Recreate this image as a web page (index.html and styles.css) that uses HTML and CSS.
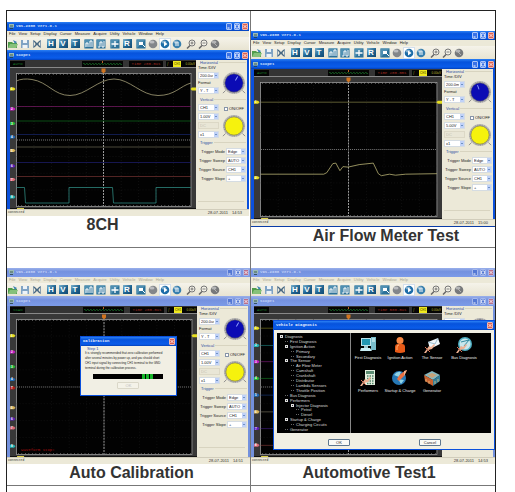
FILE: index.html
```html
<!DOCTYPE html>
<html lang="en">
<head>
<meta charset="utf-8">
<title>VDS-2088 Gallery</title>
<link rel="stylesheet" href="styles.css">
</head>
<body>
<main class="gallery">
  <figure class="cell cell-raised">
    <div class="window" data-view="channels"></div>
    <figcaption class="caption shift-left">8CH</figcaption>
  </figure>
  <figure class="cell">
    <div class="window" data-view="airflow"></div>
    <figcaption class="caption shift-right">Air Flow Meter Test</figcaption>
  </figure>
  <figure class="cell">
    <div class="window" data-view="calibration"></div>
    <figcaption class="caption">Auto Calibration</figcaption>
  </figure>
  <figure class="cell">
    <div class="window" data-view="diagnosis"></div>
    <figcaption class="caption">Automotive Test1</figcaption>
  </figure>
  <div class="cell cell-empty"></div>
  <div class="cell cell-empty"></div>
</main>
<script src="app.js"></script>
</body>
</html>
```
FILE: styles.css
```css
* { box-sizing: border-box; }

body {
  margin: 10px 19px 0 6px;
  background: #fff;
  color: #333;
  font-family: "Liberation Sans", Arial, sans-serif;
}

.gallery {
  display: grid;
  grid-template-columns: 1fr 1fr;
  grid-template-rows: auto auto 1fr;
  min-height: calc(100vh - 10px);
  border: 1px solid #222;
  border-bottom: 0;
}

.cell {
  min-width: 0;
  margin: 0;
  padding: 20px 0 2px;
  border-bottom: 1px solid #777;
}
.cell:nth-child(odd) { border-right: 1px solid #777; }
.cell:nth-child(3), .cell:nth-child(4) { padding-bottom: 3px; }
.cell-raised { padding-top: 11px; }
.cell-raised .window { margin-right: 1px; }
.cell-empty { padding: 0; border-bottom: 0; }

.caption {
  font-size: 16px;
  line-height: 18px;
  font-weight: bold;
  text-align: center;
}
.shift-left { padding-right: 52px; }
.shift-right { padding-left: 26px; }
.cell:nth-child(3) .caption { padding-left: 6px; }
.cell:nth-child(4) .caption { padding-right: 8px; }

/* Application window */
.window {
  --frame: #0a50dc;
  position: relative;
  background: #ece9d8;
  color: #222;
  font-family: "Liberation Sans Narrow", "Liberation Sans", sans-serif;
  font-size: 4px;
  line-height: 5px;
}
.window.inactive { --frame: #7391dd; }

.titlebar {
  display: flex;
  align-items: center;
  gap: 2px;
  height: 9px;
  padding: 0 1px 0 2px;
  background: linear-gradient(#2b80f5, #0653dc 30%, #0a5cea 80%, #0340b8);
  color: #cfe0fd;
  font: bold 4px/9px "Liberation Mono", monospace;
}
.inactive .titlebar { background: linear-gradient(#9ab0ea, #7491df 40%, #7c9be8); color: #c4d3f8; }
.titlebar .name { flex: 1; }
.titlebar.child { height: 10px; line-height: 10px; }
.app-icon { width: 5px; height: 5px; }

.winbtn {
  display: block;
  width: 6px;
  height: 7px;
  padding: 0;
  border: 1px solid #a9c5f8;
  border-radius: 1px;
  background: #3a72e6;
}
.winbtn svg { display: block; width: 4px; height: 5px; }
.winbtn.close { background: #dc6052; border-color: #efb6ae; }
.inactive .winbtn { border-color: #a5b8ec; background: #5478d4; }
.inactive .winbtn.close { background: #b9708c; }
.buttons { display: flex; gap: 2px; }

.menu {
  display: flex;
  gap: 3px;
  height: 6px;
  padding-left: 2px;
  line-height: 6px;
}
.menu a { color: #222; text-decoration: none; }
.inactive .menu a { color: #aaa796; }

.toolbar {
  display: flex;
  align-items: center;
  height: 13px;
  background: linear-gradient(#f5f3ea, #e8e4d2);
}
.tool {
  flex: none;
  display: flex;
  align-items: center;
  justify-content: center;
  width: 12px;
  height: 12px;
  padding: 0;
  border: 0;
  background: none;
}
.tool svg { display: block; width: 10px; height: 10px; }
.tool.gap { margin-left: 2px; }
.tool.on { background: #fff; outline: 1px solid #d3dfec; outline-offset: -1px; }
.letter {
  width: 9px;
  height: 9px;
  background: linear-gradient(135deg, #7fb4cf, #1d628f 55%, #124a73);
  color: #fff;
  font: bold 8px/9px "Liberation Sans", sans-serif;
}

.body {
  display: flex;
  height: 150px;
  padding: 0 2px 0 3px;
  background: var(--frame);
}
.cell-raised .body { height: 149px; }
.inactive .body { height: 151px; }
.airflow { border-bottom: 1px solid #0a3ca8; }

/* Oscilloscope */
.scope {
  flex: 1;
  min-width: 0;
  display: flex;
  flex-direction: column;
  background: #343434;
}
.readout {
  display: grid;
  grid-template-columns: 15px 57fr 41px 6px 34px 3px 30px;
  height: 8px;
  padding: 1px 0;
  border-bottom: 1px solid #888;
  font: 4px/6px "Liberation Mono", monospace;
}
.readout > * { background: #050505; overflow: hidden; white-space: nowrap; }
.readout .blank { background: none; }
.mode { padding-left: 3px; color: #187b25; }
.preview { display: block; width: 41px; height: 6px; }
.timebase { text-align: center; color: #a02a20; }
.trigger { display: flex; justify-content: space-between; padding: 0 1px; color: #bdbb30; font: 3px/6px "Liberation Sans", sans-serif; }
.trigger b { padding: 0 1px; background: #efe91e; color: #776f00; }
.plot { display: block; flex: 1; width: 100%; min-height: 0; background: #383838; }
.note { fill: #a80f0f; font: 4px "Liberation Mono", monospace; }
.tag { fill: #fff; font: bold 3px "Liberation Sans", sans-serif; }

/* Control panel */
.panel { flex: none; width: 51px; padding: 0 1px 0 2px; background: #ece9d8; }
.group { min-width: 0; margin: 0; padding: 0; border: 0; }
.group legend {
  display: flex;
  align-items: center;
  gap: 1px;
  width: 100%;
  height: 5px;
  padding: 0 0 0 2px;
  color: #3151a2;
  line-height: 5px;
}
.group legend::after { content: ""; flex: 1; border-top: 1px solid #d8d4c0; }
.group.horizontal { height: 37px; }
.group.vertical { height: 43px; }
.pair { display: flex; justify-content: space-between; }
.stack { display: flex; flex-direction: column; gap: 1px; width: 21px; }
.stack label { line-height: 6px; white-space: nowrap; }
.vertical .stack { padding-top: 2px; gap: 2px; }
.dial { display: flex; flex-direction: column; align-items: center; width: 24px; }
.horizontal .dial { padding-top: 6px; }
.vertical .dial { padding-top: 3px; gap: 2px; }
.knob { display: block; width: 24px; height: 24px; }

.box {
  display: block;
  width: 100%;
  height: 7px;
  padding: 0 5px 0 1px;
  border: 1px solid #d5dce2;
  border-radius: 0;
  appearance: none;
  background: linear-gradient(#7092c5, #7092c5) right 1px center / 2px 1px no-repeat,
    linear-gradient(90deg, transparent calc(100% - 4px), #c0d2f8 0) #fff;
  color: #222;
  font: 4px/5px "Liberation Sans Narrow", "Liberation Sans", sans-serif;
}
.box:disabled { background: #e9e6d6; border-color: #dcd8c6; color: #c5c1b0; opacity: 1; }
.check { display: flex; align-items: center; gap: 1px; height: 7px; font: 4px/7px "Liberation Sans", sans-serif; }
.check input {
  flex: none;
  width: 4px;
  height: 4px;
  margin: 0;
  appearance: none;
  border: 1px solid #8794a8;
  background: #fff;
}
.trig-rows { display: grid; gap: 2px; padding-top: 3px; }
.trig-row { display: grid; grid-template-columns: 1fr 20px; gap: 1px; align-items: center; height: 7px; text-align: right; white-space: nowrap; }
.rule { height: 1px; margin: 19px 2px 0 0; background: #d8d4c0; }

.status {
  display: flex;
  justify-content: space-between;
  height: 7px;
  padding: 0 7px 0 1px;
  border-top: 1px solid #d1cdbb;
  font: 3px/6px "Liberation Mono", monospace;
  color: #333;
}
.status .stamp { display: flex; gap: 4px; font: 4px/6px "Liberation Sans Narrow", "Liberation Sans", sans-serif; }

/* Dialogs over a window */
.dialog { position: absolute; border: 1px solid #0a50dc; background: #f1efe4; }
.dialog .titlebar { background: linear-gradient(#2b80f5, #0653dc 30%, #0a5cea 80%, #0340b8); color: #eaf2ff; }
.dialog .winbtn.close { background: #dc6052; border-color: #efb6ae; }
.push {
  width: 22px;
  height: 7px;
  padding: 0;
  border: 1px solid #60788f;
  border-radius: 1px;
  background: #fafaf6;
  color: #222;
  font: 4px/5px "Liberation Sans Narrow", "Liberation Sans", sans-serif;
}
.push:disabled { border-color: #dad7c8; background: #f4f2e8; color: #bbb; }

.calibrate { left: 30%; top: 68px; width: 40%; height: 60px; }
.step { padding: 1px 4px 0; }
.step h2 { margin: 0 0 0 2px; color: #3151a2; font-size: 4px; line-height: 4px; font-weight: normal; }
.step p { margin: 0; color: #222; font: 3px/5px "Liberation Sans", sans-serif; white-space: nowrap; }
.progress { display: flex; height: 5px; margin: 3px 9px 3px 8px; padding-left: 49px; background: #000; }
.progress span { width: 3px; margin-right: 1px; background: #17b52a; }
.step .push { display: block; margin: 0 auto; }

.vehicle { left: 22px; right: 0; top: 52px; height: 130px; }
.vehicle .content { display: flex; height: 100px; margin: 3px 3px 0; background: #000; color: #ddd; }
.tree {
  display: grid;
  grid-auto-rows: minmax(0, 1fr);
  width: 74px;
  margin: 0;
  padding: 1px 0 1px 3px;
  border-right: 1px solid #888;
  list-style: none;
  white-space: nowrap;
}
.tree li { display: flex; align-items: center; gap: 2px; }
.tree li::before { content: ""; flex: none; width: 3px; border-top: 1px dotted #666; }
.tree .node::before { height: 3px; border: 0; background: linear-gradient(#333, #333) center / 1px 1px no-repeat #ddd; }
.tree .d1 { padding-left: 5px; }
.tree .d2 { padding-left: 11px; }
.tree .d3 { padding-left: 16px; }
.items { display: grid; grid-template-columns: repeat(4, 32px); grid-auto-rows: 33px; padding-top: 3px; margin: 0 0 0 1px; }
.item { display: flex; flex-direction: column; align-items: center; gap: 2px; padding: 0; border: 0; background: none; color: #eee; font: inherit; white-space: nowrap; }
.item svg { display: block; width: 18px; height: 17px; }
.actions { display: flex; justify-content: space-between; padding: 6px 53px 0 54px; }
```
FILE: app.js
```js
const svg = (box, inner, cls = '') => `<svg class="${cls}" viewBox="0 0 ${box}" aria-hidden="true">${inner}</svg>`;

/* ---- Toolbar ---- */
const tile = '<rect x=".5" y=".5" width="9" height="9" fill="#2b7199"/><path d="M.5 9.500V.5h9z" fill="#4f8fb2"/>';
const ball = (c) => `<circle cx="5" cy="5" r="4.300" fill="${c}"/><ellipse cx="4" cy="3" rx="2.500" ry="1.600" fill="#fff" opacity=".45"/>`;
const lens = (sign) => `<circle cx="6" cy="4" r="3" fill="#f2f0e6" stroke="#777" stroke-width="1"/><path d="M4 6.500 1 9.500" stroke="#666" stroke-width="1.500"/><path d="${sign}" stroke="#555" stroke-width=".7"/>`;
const tools = [
  ['Open', '<path d="M0 3h4l1 1h4v5H0z" fill="#4f9c4b"/><path d="M2 5h8L8 9H0z" fill="#86c17a"/><path d="M5 1l4 2-2 2z" fill="#3d83b0"/>'],
  ['Save', '<path d="M1 1h8v8H1z" fill="#7fa3c4"/><path d="M3 1h4v3H3zM2.500 6h5v3h-5z" fill="#edf3f8"/>'],
  ['Fit', '<path d="M1.500 1v8M8.500 1v8" stroke="#8aa0b2"/><path d="M2 2l6 6M8 2L2 8" stroke="#496882" stroke-width="1.300"/><path d="M3.500 4h3v2h-3z" fill="#496882"/>'],
  ['H', null, 1], ['V', null], ['T', null],
  ['Waveform 1', tile + '<path d="M2 8V4h2v4M6 8V2h2v6" stroke="#fff" fill="none"/>', 1],
  ['Waveform 2', tile + '<path d="M2 8h2V3h2v5h2V2" stroke="#fff" fill="none"/>'],
  ['Grid', tile + '<path d="M5 2v6M1.500 5h7" stroke="#fff" stroke-width="1.300"/>', 1],
  ['R', null],
  ['Snapshot', tile + '<path d="M3 3h4v3H3z" fill="#fff"/><path d="M6 5l3 3" stroke="#fff"/>', 1],
  ['Record', ball('#83868a')],
  ['Run', ball('#1d6da8') + '<path d="M4 2.500 7.500 5 4 7.500z" fill="#fff"/>', 0, 1],
  ['Pause', ball('#377fae') + '<path d="M4 3v4M6 3v4" stroke="#fff"/>'],
  ['Zoom in', lens('M4.500 4h3M6 2.500v3'), 1],
  ['Zoom out', lens('M4.500 4h3')],
  ['Stop', ball('#77797b') + '<path d="M3 3l4 4" stroke="#b3b3b3"/>'],
];
const toolbar = tools.map(([name, art, gap, on]) =>
  `<button class="tool${gap ? ' gap' : ''}${on ? ' on' : ''}" type="button" aria-label="${name}">${art ? svg('10 10', art) : `<span class="letter">${name}</span>`}</button>`).join('');

const menu = ['File', 'View', 'Setup', 'Display', 'Cursor', 'Measure', 'Acquire', 'Utility', 'Vehicle', 'Window', 'Help']
  .map((m) => `<a href="#">${m}</a>`).join('');

const close = `<button class="winbtn close" type="button" aria-label="Close">${svg('4 5', '<path d="M.5 1l3 3M3.500 1l-3 3" stroke="#fff" stroke-width=".8"/>')}</button>`;
const titlebar = (name, cls = '') => `<div class="titlebar ${cls}">
  ${svg('5 5', '<rect width="5" height="3.500" fill="#9bbcb4"/><path d="M1 2h3M1 4.500h3" stroke="#24433f" stroke-width=".8"/>', 'app-icon')}
  <span class="name">${name}</span>
  <span class="buttons">
    <button class="winbtn" type="button" aria-label="Minimize">${svg('4 5', '<path d="M.5 4h2" stroke="#fff"/>')}</button>
    <button class="winbtn" type="button" aria-label="Maximize">${svg('4 5', '<path d="M.5 1h3v3h-3z" fill="none" stroke="#fff" stroke-width=".7"/>')}</button>
    ${close}
  </span></div>`;

/* ---- Plot ---- */
const C = { y: '#e6df20', m: '#c41cc0', g: '#21b536', b: '#1c68b4', t: '#d8b45a', p: '#5b20b8', r: '#d86878', c: '#21b3b3', d: '#b01d1d' };
const tag = ([y, color, n], x = 0) =>
  `<path d="M${x} ${y - 1.5}h4l1.500 1.500-1.500 1.500h-4z" fill="${C[color]}"/><text class="tag" x="${x + 1}" y="${y + 1}">${n}</text>`;
const line = (y, color, end = 181) => `<path d="M6.500 ${y}H${end}" stroke="${color}" stroke-width=".7" opacity=".8"/>`;

const views = {
  channels: {
    time: '200.0us', format: 'Y - T', volts: '1.00V', mode: 'AUTO', clock: '14:53', angle: 30,
    tags: [[21, 'y', 1], [41, 'm', 2], [55.5, 'g', 3], [69, 'b', 4], [82.5, 't', 5], [98, 'p', 6], [111.5, 'r', 7], [129, 'c', 8]],
    right: 21,
    art: '<path d="M6.500 13C10 11 16 10.500 22 11.500C38 14 44 27.500 60 27.500S88 11 104 11S131 27.500 148 27.500S170 18 181 15" fill="none" stroke="#a7a17a" stroke-width=".8"/>'
      + line(38.5, '#9b2181') + line(53, '#168a26') + line(66.5, '#1d3188') + line(79, '#87826a') + line(94.5, '#27278f') + line(108.5, '#94403f')
      + '<path d="M6.500 119.500H14.500L15.500 135H59V119.500H102.500L103.500 135H146V119.500H181" fill="none" stroke="#2d877d" stroke-width=".8"/>',
  },
  airflow: {
    time: '200.0ms', format: 'Y - T', volts: '5.00V', mode: 'AUTO', clock: '15:00', angle: -20,
    tags: [[25, 'y', 1], [100, 'y', 2]],
    right: 25,
    art: line(25, '#a5a157') + '<path d="M6.500 96.500H69L72 95 78 86 81 85.500 85 93 88 89 93 89.500 104 87 118 85.500 123 96 126 98 134 96.500 140 97.500 150 96.500 181 96" fill="none" stroke="#b6b073" stroke-width=".8"/>',
  },
  calibration: {
    inactive: true, time: '200.0us', format: 'Y - T', volts: '1.00V', mode: 'SCAN', clock: '14:51', angle: 30,
    tags: [[21.5, 'y', 1], [37.5, 'm', 2], [52, 'g', 3], [64.5, 'b', 4], [73, 'd', 'T'], [92.5, 't', 5], [103.5, 'p', 6], [112.5, 'r', 7], [130.5, 'c', 8]],
    right: 21.5,
    art: '<text class="note" x="11" y="135">Waveform stop!</text>',
  },
  diagnosis: {
    inactive: true, time: '500.0us', format: 'Y - T', volts: '1.00V', mode: 'AUTO', clock: '14:53', angle: 30,
    tags: [[14, 'y', 1], [31, 'c', 2], [47, 'm', 3], [63.5, 'g', 4], [80, 'b', 5], [96.5, 't', 6], [113, 'p', 7], [129.5, 'r', 8]],
    art: line(14, '#8c8a22') + line(31, '#21908f') + line(47, '#8d2189') + line(63.5, '#168a26') + line(80, '#1d4188') + line(96.5, '#87826a') + line(113, '#47208f') + line(129.5, '#94403f'),
  },
};

function plot(v) {
  let grid = '';
  for (let i = 1; i < 10; i++) grid += `M${6.5 + i * 17.45} 5V138`;
  for (let i = 1; i < 8; i++) grid += `M6.500 ${5 + i * 16.7}H181`;
  return `<svg class="plot" viewBox="0 0 186 141" preserveAspectRatio="none" aria-hidden="true">
    <rect x="6.500" y="5.500" width="174.500" height="133" fill="#020202" stroke="#999" stroke-width=".8"/>
    <path d="${grid}" stroke="#292929" stroke-width=".4" stroke-dasharray="1 2"/>
    <path d="M8 6.500H180M8 137.500H180" stroke="#888" stroke-dasharray=".6 2.890"/>
    <path d="M93.500 5V138" stroke="#999" stroke-width="1" stroke-dasharray="2 1"/>
    <path d="M7 72H181" stroke="#777" stroke-width="1" stroke-dasharray="1 1"/>
    ${v.art}
    <path d="M91.500 .5h4v3l-2 2-2-2z" fill="#d17520"/>
    <path d="M0 140.500H186" stroke="#111"/><path d="M7 140.500h7" stroke="#ddd14b"/>
    ${v.tags.map((t) => tag(t)).join('')}
    ${v.right ? `<path d="M186 ${v.right - 1.5}h-4l-1.500 1.500 1.500 1.500h4z" fill="#e6df20"/>` : ''}
  </svg>`;
}

const preview = svg('41 6', `<path d="M1 3${'l1 -1 1 2 1 -1'.repeat(13)}" fill="none" stroke="#176925" stroke-width=".7"/><path d="M20.500 0v2" stroke="#bd6125"/>`, 'preview');

const knob = (color, angle) => svg('26 26', `
  <path d="M4 21l-3 3M22 21l3 3" stroke="#888" stroke-width="1"/>
  <circle cx="13" cy="13" r="12" fill="#c4c3c0"/><circle cx="13" cy="13" r="11" fill="none" stroke="#85848a" stroke-width="1" stroke-dasharray="1 1"/>
  <circle cx="13" cy="13" r="10" fill="${color}" stroke="#65645f" stroke-width=".7"/>
  ${angle === null ? '' : `<path d="M13 10V5" stroke="#91a1ff" stroke-width="1" transform="rotate(${angle} 13 13)"/>`}`, 'knob');

const select = (label, value, off) => `<select class="box" aria-label="${label}"${off ? ' disabled' : ''}><option>${value}</option></select>`;

function panel(v, id) {
  const rows = [['Mode', 'Edge'], ['Sweep', 'AUTO'], ['Source', 'CH1'], ['Slope', '+']];
  return `<div class="panel">
    <fieldset class="group horizontal"><legend>Horizontal</legend><div class="pair">
      <div class="stack">
        <label for="${id}-time">Time /DIV</label>
        <select class="box" id="${id}-time"><option>${v.time}</option></select>
        <label for="${id}-format">Format</label>
        <select class="box" id="${id}-format"><option>${v.format}</option></select>
      </div><div class="dial">${knob('#0b0bb4', v.angle)}</div></div></fieldset>
    <fieldset class="group vertical"><legend>Vertical</legend><div class="pair">
      <div class="stack">${select('Channel', 'CH1')}${select('Volts', v.volts)}${select('Coupling', 'DC', true)}${select('Probe', 'x1')}</div>
      <div class="dial"><label class="check"><input type="checkbox" checked>ON/OFF</label>${knob('#f6f20d', null)}</div></div></fieldset>
    <fieldset class="group"><legend>Trigger</legend><div class="trig-rows">
      ${rows.map(([n, val]) => `<div class="trig-row"><label for="${id}-${n}">Trigger ${n}</label><select class="box" id="${id}-${n}"><option>${val}</option></select></div>`).join('')}
    </div></fieldset><div class="rule"></div></div>`;
}

/* ---- Dialogs ---- */
const calibrate = `<section class="dialog calibrate">
  <div class="titlebar"><span class="name">Calibration</span>${close}</div>
  <div class="step"><h2>Step 1</h2>
    <p>It is strongly recommended that zero calibration performed<br>after several minutes by power up, and you should short<br>CH1 input signal by connecting CH1 terminal to the GND<br>terminal during the calibration process.</p>
    <div class="progress"><span></span><span></span><span></span></div>
    <button class="push" type="button" disabled>OK</button></div></section>`;

const hand = '<path d="M1 17l5-7 2 1 3-3 1 1-3 4-4 1-2 3z" fill="#eeb092"/><path d="M2 11l5 5" stroke="#d97357"/>';
const items = [
  ['First Diagnosis', '<path d="M2 2h10v8H2z" fill="#bce4ec"/><path d="M3 3h8v6H3z" fill="#2297b3"/><path d="M5 10h4v2H5z" fill="#9ac7d0"/><path d="M12 1h5v13h-5z" fill="#78bdcb"/><path d="M13 3h3M13 5h3" stroke="#eaffff"/><path d="M2 12h9l2 3H1z" fill="#c9eef5"/>'],
  ['Ignition Action', '<circle cx="9" cy="4.500" r="3.500" fill="#f88742"/><path d="M4 16V11q0-3 3-3h4q3 0 3 3v5q-5 2-10 0z" fill="#e75a17"/><path d="M6 14V11q0-2 2-2" stroke="#ffae70" fill="none"/>'],
  ['The Sensor', '<path d="M5 6l10-4 2 6-10 5z" fill="#edf5fa"/><path d="M5 6l7 2 3-6" fill="none" stroke="#7ba8c2" stroke-width=".7"/>' + hand],
  ['Bus Diagnosis', '<circle cx="10" cy="8" r="7" fill="#4dadc2"/><circle cx="10" cy="8" r="5.500" fill="#c9e7ec"/><path d="M6 6l8-2-5 6" fill="none" stroke="#318a9f"/>' + hand],
  ['Performers', '<path d="M6 1h10v15H6z" fill="#e4efdf"/><path d="M7 2h8v3H7z" fill="#5b8c73"/><path d="M8 7h7M8 9.500h7M8 12h7M8 14.500h7" stroke="#52866b" stroke-width="1.300" stroke-dasharray="1.500 1"/>' + hand],
  ['Startup &amp; Charge', '<circle cx="8" cy="9" r="7" fill="#2678b6"/><path d="M3 6q3-4 7-3L8 8zM7 10l6 1-3 4z" fill="#8fd2e5"/><path d="M6 10q3-6 10-9l-3 6-5 5z" fill="#ec7041"/><path d="M13 2l3-1-3 6z" fill="#f1b28f"/>'],
  ['Generator', '<path d="M1 6l8-4 8 4-7 5z" fill="#84b9c2"/><path d="M1 6l9 5v6l-8-5z" fill="#c76331"/><path d="M17 6l-7 5v6l7-5z" fill="#347e97"/><path d="M4 6l5-2 5 2-5 3z" fill="#c6a37a"/><path d="M3 10v3M6 12v3M12 12v3M15 10v3" stroke="#e4bd7c" stroke-width=".8"/>'],
];
const tree = [
  [0, 'Diagnosis', 1], [1, 'First Diagnosis'], [1, 'Ignition Action', 1], [2, 'Primary'], [2, 'Secondary'], [1, 'The Sensor', 1],
  [2, 'Air Flow Meter'], [2, 'Camshaft'], [2, 'Crankshaft'], [2, 'Distributor'], [2, 'Lambda Sensors'], [2, 'Throttle Position'],
  [1, 'Bus Diagnosis'], [1, 'Performers', 1], [2, 'Injector Diagnosis', 1], [3, 'Petrol'], [3, 'Diesel'], [1, 'Startup &amp; Charge', 1],
  [2, 'Charging Circuits'], [1, 'Generator'],
];
const vehicle = `<section class="dialog vehicle">
  <div class="titlebar"><span class="name">Vehicle Diagnosis</span>${close}</div>
  <div class="content">
    <ul class="tree">${tree.map(([d, t, n]) => `<li class="d${d}${n ? ' node' : ''}">${t}</li>`).join('')}</ul>
    <div class="items">${items.map(([t, art]) => `<button class="item" type="button">${svg('18 17', art)}<span>${t}</span></button>`).join('')}</div>
  </div>
  <div class="actions"><button class="push" type="button">OK</button><button class="push" type="button">Cancel</button></div></section>`;

document.querySelectorAll('.window').forEach((el) => {
  const id = el.dataset.view;
  const v = views[id];
  el.classList.add(id);
  if (v.inactive) el.classList.add('inactive');
  el.innerHTML = `${titlebar('VDS-2088 Ver1.0.1')}
    <nav class="menu">${menu}</nav>
    <div class="toolbar">${toolbar}</div>
    ${titlebar('Scope1', 'child')}
    <div class="body">
      <div class="scope">
        <div class="readout"><span class="mode">${v.mode}</span><span class="blank"></span>${preview}<span class="blank"></span>
          <span class="timebase">Time ${v.time}</span><span class="blank"></span><span class="trigger">ƒ <b>CH1</b> 0.00uV</span></div>
        ${plot(v)}
      </div>
      ${panel(v, id)}
    </div>
    <div class="status"><span>Connected</span><span class="stamp"><span>28-07-2011</span><span>${v.clock}</span></span></div>
    ${id === 'calibration' ? calibrate : ''}${id === 'diagnosis' ? vehicle : ''}`;
});
```
